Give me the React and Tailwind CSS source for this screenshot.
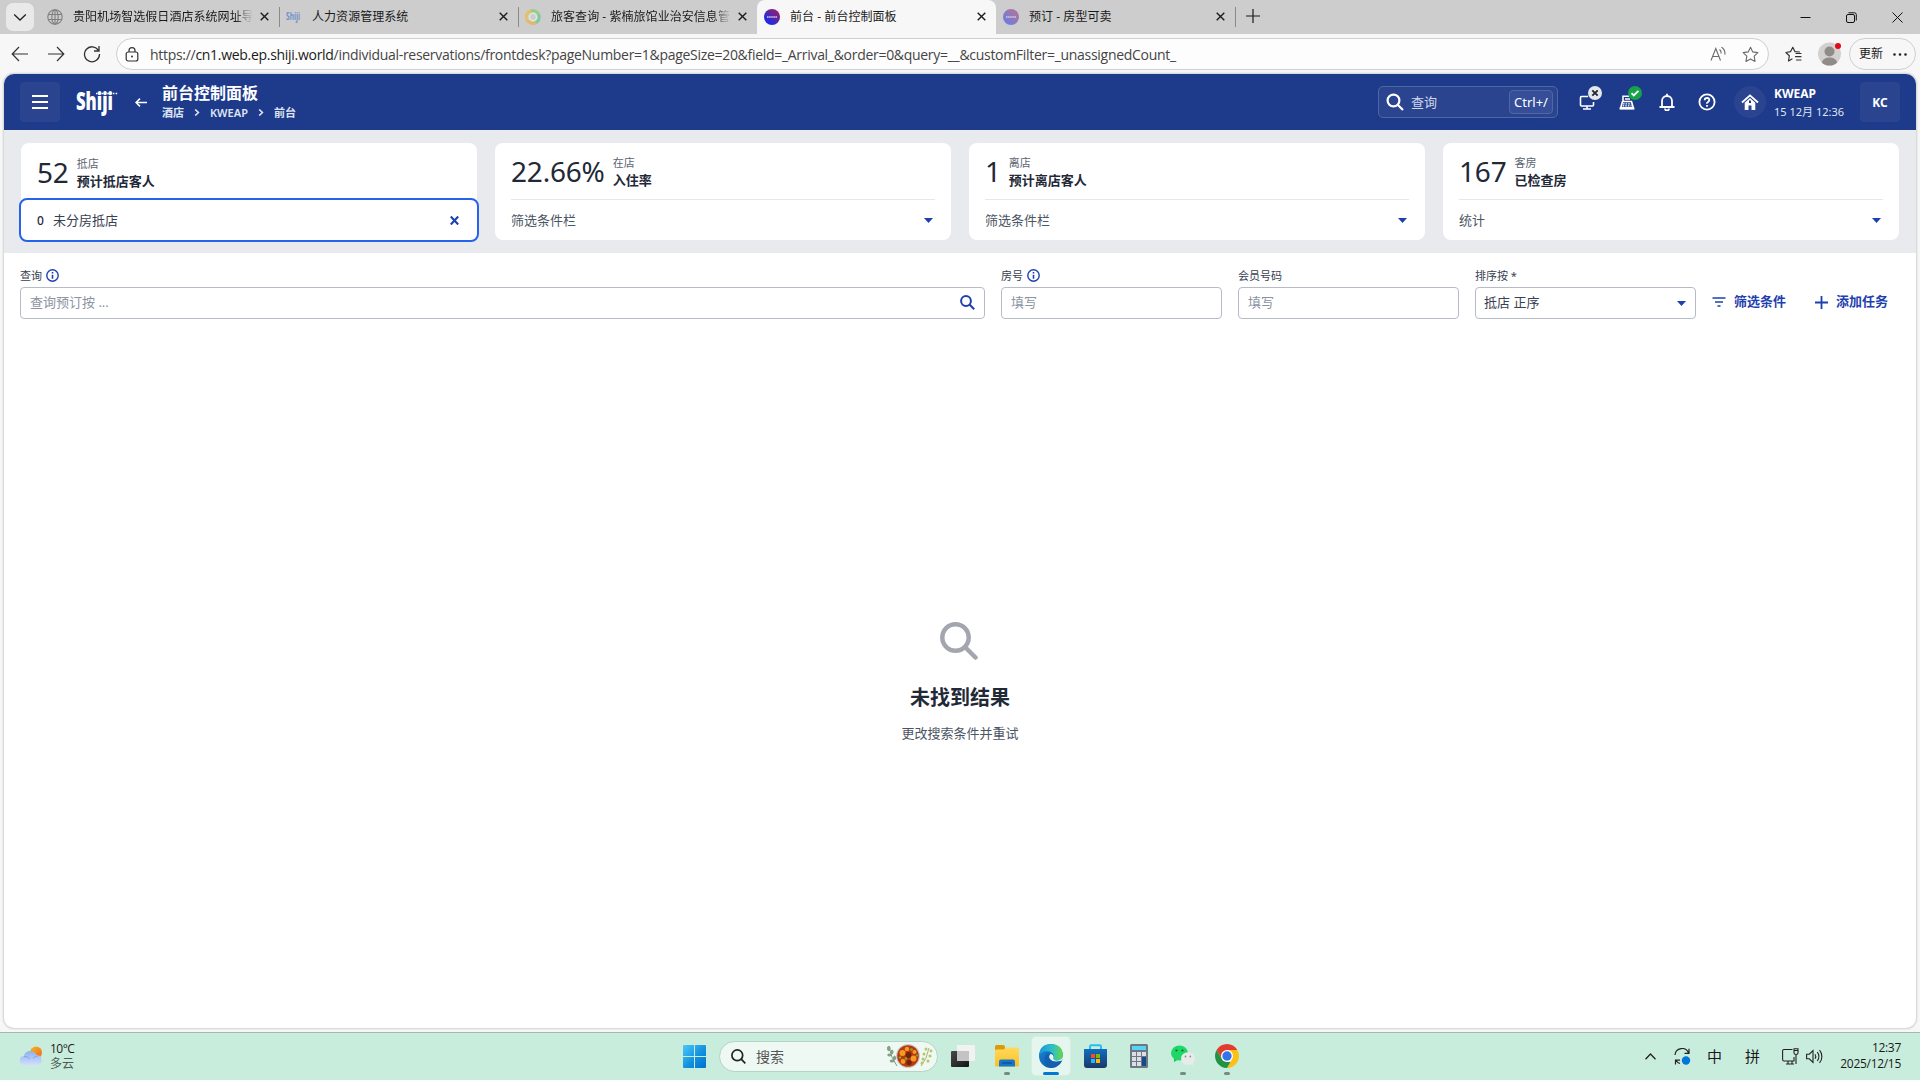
import React from "react";

const UI = "font-['Noto_Sans','Noto_Sans_CJK_SC',sans-serif]";
const SYS = "font-['Open_Sans','Noto_Sans_CJK_SC',sans-serif]";

/* ---------- browser chrome ---------- */

function CloseX({ className = "" }) {
  return (
    <svg className={"h-[9px] w-[9px] shrink-0 " + className} viewBox="0 0 9 9" fill="none" stroke="#1b1b1b" strokeWidth="1.4">
      <path d="M0.7 0.7L8.3 8.3M8.3 0.7L0.7 8.3" />
    </svg>
  );
}

function Globe() {
  return (
    <svg className="h-4 w-4" viewBox="0 0 16 16" fill="none" stroke="#7f7f7f" strokeWidth="1.1">
      <circle cx="8" cy="8" r="7.2" />
      <ellipse cx="8" cy="8" rx="3.2" ry="7.2" />
      <path d="M1.5 5.5h13M1.5 10.5h13M8 1v14" />
    </svg>
  );
}

function ShijiSmall() {
  return (
    <svg className="h-4 w-4" viewBox="0 0 16 16">
      <text x="0" y="11" textLength="14" lengthAdjust="spacingAndGlyphs" fontSize="10" fontWeight="700" fill="#6f8fc8" fontFamily="Open Sans">Shiji</text>
    </svg>
  );
}

function Swirl() {
  return (
    <svg className="h-4 w-4" viewBox="0 0 16 16" fill="none" strokeWidth="3" strokeLinecap="round">
      <path d="M3 12.5A6.3 6.3 0 0 1 7 1.8" stroke="#e6bf6c" />
      <path d="M7 1.8A6.3 6.3 0 0 1 14 6.5" stroke="#8fd08c" />
      <path d="M14 7A6.3 6.3 0 0 1 10.5 13.8" stroke="#7ccaa6" />
      <path d="M10 14A6.3 6.3 0 0 1 3.5 12.5" stroke="#e3b56e" />
      <circle cx="8" cy="8" r="3.6" stroke="#e0ecd2" strokeWidth="1.4" />
    </svg>
  );
}

function Orb({ faded }) {
  return (
    <svg className={"h-4 w-4 " + (faded ? "opacity-50" : "")} viewBox="0 0 16 16">
      <defs>
        <linearGradient id="orb" x1="0.1" y1="0.95" x2="0.75" y2="0.2">
          <stop offset="0" stopColor="#0a2bff" />
          <stop offset="0.45" stopColor="#3a2bc4" />
          <stop offset="1" stopColor="#86207c" />
        </linearGradient>
      </defs>
      <circle cx="8" cy="8" r="8" fill="url(#orb)" />
      <path d="M3 8h10" stroke="#d9c4ea" strokeWidth="1.5" strokeDasharray="1.6 0.5" />
    </svg>
  );
}

function Tab({ icon, title, active, fade, divider }) {
  return (
    <div className={"relative flex h-full w-[239px] shrink-0 items-center pl-[7px] pr-[10px] " + (active ? "rounded-t-[8px] bg-[#f7f7f7]" : "")}>
      {icon}
      <div className={"ml-[10px] h-[18px] w-[180px] overflow-hidden whitespace-nowrap text-[12px] leading-[17px] tracking-[0.05px] text-[#1a1a1a] " + (fade ? "[mask-image:linear-gradient(to_right,black_90%,transparent_100%)]" : "")}>
        {title}
      </div>
      <CloseX className="ml-auto mt-[-1px]" />
      {divider && <div className="absolute right-[-1px] top-[7px] h-5 w-px bg-[#8a8a8a]" />}
    </div>
  );
}

function TabStrip() {
  return (
    <div className="flex h-[34px] bg-[#cdcdcd]">
      <div className="ml-[6px] mt-[3px] flex h-7 w-7 shrink-0 items-center justify-center rounded-[7px] bg-[#e9e9e9]">
        <svg className="h-[14px] w-[14px]" viewBox="0 0 14 14" fill="none" stroke="#222" strokeWidth="1.3"><path d="M1.2 4.5L7 10l5.800-5.500" /></svg>
      </div>
      <div className="ml-[6px] flex">
        <Tab icon={<Globe />} title="贵阳机场智选假日酒店系统网址导航" fade divider />
        <Tab icon={<ShijiSmall />} title="人力资源管理系统" divider />
        <Tab icon={<Swirl />} title="旅客查询 - 紫楠旅馆业治安信息管理系统" fade />
        <Tab icon={<Orb />} title="前台 - 前台控制面板" active />
        <Tab icon={<Orb faded />} title="预订 - 房型可卖" divider />
      </div>
      <svg className="ml-[11px] mt-[9px] h-[14px] w-[14px]" viewBox="0 0 14 14" stroke="#1b1b1b" strokeWidth="1.2"><path d="M7 0v14M0 7h14" /></svg>
      <div className="ml-auto mr-[17px] flex items-center gap-[35px]">
        <svg className="h-[11px] w-[11px]" viewBox="0 0 11 11" stroke="#111" strokeWidth="1"><path d="M0.500 5.500h10" /></svg>
        <svg className="h-[11px] w-[11px]" viewBox="0 0 11 11" fill="none" stroke="#111" strokeWidth="1"><rect x="0.500" y="2.500" width="8" height="8" rx="1.500" /><path d="M2.500 0.800H8.500Q10.300 0.800 10.300 2.600V8.500" /></svg>
        <svg className="h-[11px] w-[11px]" viewBox="0 0 11 11" fill="none" stroke="#111" strokeWidth="1"><path d="M0.500 0.500l10 10M10.500 0.500l-10 10" /></svg>
      </div>
    </div>
  );
}

function Toolbar() {
  return (
    <div className="flex h-10 items-center bg-[#f7f7f7]">
      <svg className="ml-[11px] h-[18px] w-[18px]" viewBox="0 0 18 18" fill="none" stroke="#333" strokeWidth="1.2"><path d="M17 9H1.200M8 2L1.200 9L8 16" /></svg>
      <svg className="ml-[18px] h-[18px] w-[18px]" viewBox="0 0 18 18" fill="none" stroke="#333" strokeWidth="1.2"><path d="M1 9h15.800M10 2L16.800 9L10 16" /></svg>
      <svg className="ml-[18px] h-[18px] w-[18px]" viewBox="0 0 18 18" fill="none" stroke="#333" strokeWidth="1.3"><path d="M15.500 5.500A7.500 7.500 0 1 0 16.500 9M16 1v5h-5" /></svg>
      <div className="ml-[15px] flex h-8 w-[1653px] items-center rounded-full border border-[#cfcfcf] bg-[#fdfdfd]">
        <svg className="ml-[8px] h-[15px] w-[14px]" viewBox="0 0 14 15" fill="none" stroke="#333" strokeWidth="1.200"><rect x="1.200" y="5" width="11.600" height="9" rx="2" /><path d="M4 5V3.600a3 3 0 0 1 6 0V5" /><circle cx="7" cy="9.500" r="1" fill="#333" stroke="none" /></svg>
        <div className="ml-[11px] whitespace-nowrap text-[14px] tracking-[-0.295px] text-[#454545]">
          https://<span className="text-[#1a1a1a]">cn1.web.ep.shiji.world</span>/individual-reservations/frontdesk?pageNumber=1&amp;pageSize=20&amp;field=_Arrival_&amp;order=0&amp;query=__&amp;customFilter=_unassignedCount_
        </div>
        <svg className="ml-auto h-4 w-4" viewBox="0 0 16 16" fill="none" stroke="#6a6a6a" strokeWidth="1.1"><path d="M1 14.500L5.800 2.500L10.500 14.500M2.600 10.500h6.300M9.500 3.500a4 4 0 0 1 1.500 4M11.500 1.200a7.500 7.500 0 0 1 3.300 7.500" /></svg>
        <svg className="ml-[16px] mr-[9px] h-[17px] w-[17px]" viewBox="0 0 17 17" fill="none" stroke="#6a6a6a" strokeWidth="1.100" strokeLinejoin="round"><path d="M8.500 1.200l2.250 4.700 5.100.7-3.700 3.600.9 5.200-4.550-2.500-4.550 2.500.9-5.200L1.150 6.600l5.100-.7z" /></svg>
      </div>
      <svg className="ml-[16px] h-[17px] w-[17px]" viewBox="0 0 17 17" fill="none" stroke="#333" strokeWidth="1.200" strokeLinejoin="round" strokeLinecap="round"><path d="M14.500 6L10 5.700 7.800 1.300 5.500 5.700.900 6.500l3.400 3.300-.8 5.200 3.500-2M11 7.500h5M10.500 10.700h5.500M11.500 14h4.500" /></svg>
      <div className="relative ml-[16px] h-[23px] w-[23px]">
        <svg className="mt-[-1px] h-6 w-[23px]" viewBox="0 0 23 24"><defs><clipPath id="av"><circle cx="11.500" cy="12" r="11.500" /></clipPath></defs><g clipPath="url(#av)"><rect width="23" height="24" fill="#d3d1cf" /><circle cx="11.500" cy="9.500" r="5" fill="#8f8c88" /><ellipse cx="11.500" cy="20.500" rx="7.500" ry="5" fill="#8f8c88" /></g></svg>
        <div className="absolute right-0 top-0 h-[6px] w-[6px] rounded-full bg-[#e00b1c]" />
      </div>
      <div className="ml-[8px] flex h-8 w-[67px] items-center rounded-full border border-[#cfcfcf] pl-[9px] text-[12px] text-[#1a1a1a]">
        更新
        <svg className="ml-[10px] h-[3px] w-[14px]" viewBox="0 0 14 3" fill="#222"><circle cx="1.500" cy="1.500" r="1.300" /><circle cx="7" cy="1.500" r="1.300" /><circle cx="12.500" cy="1.500" r="1.300" /></svg>
      </div>
    </div>
  );
}

/* ---------- application ---------- */

function Chevron() {
  return <svg className="h-[7px] w-[6px]" viewBox="0 0 6 7" fill="none" stroke="#dfe5f5" strokeWidth="1.600"><path d="M1.200 0.500L4.400 3.500L1.200 6.500" /></svg>;
}

function AppHeader() {
  return (
    <header className="flex h-14 shrink-0 items-center bg-[#1e3a8a] text-white">
      <div className="ml-[16px] flex h-10 w-10 items-center justify-center rounded-[4px] bg-[#2a4490]">
        <svg className="h-[14px] w-4" viewBox="0 0 16 14" stroke="#fff" strokeWidth="2"><path d="M0 1h16M0 7h16M0 13h16" /></svg>
      </div>
      <svg className="ml-[16px] h-7 w-[44px]" viewBox="0 0 44 28">
        <text x="0" y="22" textLength="37" lengthAdjust="spacingAndGlyphs" fontFamily="Open Sans" fontWeight="800" fontSize="24" fill="#fff">Shiji</text>
        <path d="M20 5.500h22" stroke="#fff" strokeWidth="1.500" strokeDasharray="1.600 1.200" />
      </svg>
      <svg className="ml-[15px] h-[9px] w-3" viewBox="0 0 12 9" fill="none" stroke="#fff" strokeWidth="1.500"><path d="M12 4.500H1M5 0.600L1 4.500L5 8.400" /></svg>
      <div className="ml-[15px] flex flex-col pt-px">
        <div className="text-[16px] font-bold leading-[20px]">前台控制面板</div>
        <div className="flex items-center text-[11px] font-semibold leading-[19px] text-[#dfe5f5]">
          <span>酒店</span><span className="mx-[10px]"><Chevron /></span><span>KWEAP</span><span className="mx-[10px]"><Chevron /></span><span>前台</span>
        </div>
      </div>

      <div className="ml-auto flex h-8 w-[180px] items-center rounded-[5px] border border-[#5067a5] bg-[#2a4490] pl-[7px] pr-[4px]">
        <svg className="h-[18px] w-[18px]" viewBox="0 0 18 18" fill="none" stroke="#fff" strokeWidth="2.200"><circle cx="7.500" cy="7.500" r="5.900" /><path d="M11.700 11.700L17 17" /></svg>
        <span className="ml-[7px] pt-px text-[13px] text-[#cfd6ea]">查询</span>
        <div className="ml-auto flex h-6 w-[44px] items-center justify-center rounded-[4px] border border-[#5067a5] bg-[#354e97] pt-px text-[13px]">Ctrl+/</div>
      </div>
      <div className="relative ml-[21px] h-4 w-4">
        <svg className="h-4 w-4" viewBox="0 0 16 16" fill="none" stroke="#fff" strokeWidth="1.600"><path d="M9 2.500H2.500Q1.500 2.500 1.500 3.500V11Q1.500 12 2.500 12H13.500Q14.500 12 14.500 11V8M4 15h8M8 12v3" /></svg>
        <svg className="absolute left-[9px] top-[-8px] h-[14px] w-[14px]" viewBox="0 0 14 14"><circle cx="7" cy="7" r="7" fill="#e5e7eb" /><path d="M4.300 4.300l5.400 5.400M9.700 4.300L4.300 9.700" stroke="#1f2937" strokeWidth="1.900" /></svg>
      </div>
      <div className="relative ml-[24px] h-4 w-4">
        <svg className="h-4 w-4" viewBox="0 0 16 16" fill="none" stroke="#fff" strokeWidth="1.600"><path d="M4 8V2.200h6M3.500 7.500h9L14.500 14.500h-13z" /><path d="M0.800 14.300h14.400" strokeWidth="2.600" /><path d="M4 9.800h8.500M3.600 11.800h9" strokeWidth="1.300" strokeDasharray="1.600 1" /><path d="M6 5h5" strokeWidth="1.400" /></svg>
        <svg className="absolute left-[9px] top-[-8px] h-[14px] w-[14px]" viewBox="0 0 14 14"><circle cx="7" cy="7" r="7" fill="#16a34a" /><path d="M3.500 7.200l2.300 2.300 4.600-4.600" fill="none" stroke="#fff" strokeWidth="1.900" /></svg>
      </div>
      <svg className="ml-[24px] h-[18px] w-4" viewBox="0 0 16 18" fill="none" stroke="#fff" strokeWidth="1.800"><path d="M0.500 14h15M3 14V8a5 5 0 0 1 10 0v6M8 3V0.800M6 15.500a2 2 0 0 0 4 0" /></svg>
      <svg className="ml-[23px] h-[18px] w-[18px]" viewBox="0 0 18 18" fill="none" stroke="#fff" strokeWidth="1.800"><circle cx="9" cy="9" r="7.600" /><path d="M6.700 7.200Q6.700 5 9 5T11.300 7Q11.300 8.100 10 8.900T9 10.700M9 12v1.700" /></svg>
      <div className="ml-[18px] flex h-8 w-8 items-center justify-center rounded-full bg-[#2a4490]">
        <svg className="h-4 w-[18px]" viewBox="0 0 18 16"><path d="M1 8.500L9 1.400L17 8.500" fill="none" stroke="#fff" strokeWidth="1.900" /><path d="M9 4L3.700 8.800V16H7.500V11.500H10.500V16H14.300V8.800z" fill="#fff" /><path d="M8 6.500h2v2.500H8z" fill="#1e3a8a" /></svg>
      </div>
      <div className="ml-[8px] w-[70px] whitespace-nowrap pt-[2px]">
        <div className="text-[12px] font-bold leading-[16px]">KWEAP</div>
        <div className="mt-[1px] text-[11px] leading-[17px] text-[#dfe5f5]">15 12月 12:36</div>
      </div>
      <div className="ml-[16px] mr-[16px] flex h-10 w-10 items-center justify-center rounded-[4px] bg-[#2a4490] pt-px text-[12px] font-bold">KC</div>
    </header>
  );
}

function Caret() {
  return <svg className="h-[5px] w-[9px]" viewBox="0 0 9 5" fill="#1e40af"><path d="M0 0h9L4.500 5z" /></svg>;
}

function StatCard({ value, label, title, filter, selected }) {
  return (
    <div className="flex h-[97px] flex-col rounded-[8px] bg-white px-4">
      <div className={"flex h-[57px] shrink-0 items-center pt-[3px] " + (selected ? "" : "border-b border-[#e5e7eb]")}>
        <span className="mt-[-3px] text-[28px] leading-[32px] tracking-[-0.200px] text-[#1f2937]">{value}</span>
        <div className="ml-[8px] mt-[-1px]">
          <div className="text-[11px] leading-[16px] text-[#5b6472]">{label}</div>
          <div className="text-[13px] font-bold leading-[18px] text-[#1f2937]">{title}</div>
        </div>
      </div>
      {selected ? (
        <div className="mx-[-18px] mt-[-2px] flex h-11 shrink-0 items-center rounded-[8px] border-2 border-[#2563eb] bg-white pl-[16px] pr-[18px] pt-px text-[13px] text-[#374151]">
          <span className="text-[12px] font-medium text-[#1f2937]">0</span>
          <span className="ml-[9px]">{filter}</span>
          <svg className="ml-auto h-[9px] w-[9px]" viewBox="0 0 9 9" stroke="#1e40af" strokeWidth="2.100"><path d="M0.800 0.500l7.400 8M8.200 0.500l-7.400 8" /></svg>
        </div>
      ) : (
        <div className="flex grow items-center justify-between pr-[2px] pt-[2px] text-[13px] text-[#4b5563]">
          {filter}
          <span className="mt-[-2px]"><Caret /></span>
        </div>
      )}
    </div>
  );
}

function Info() {
  return <svg className="ml-1 mt-[-1px] h-[13px] w-[13px]" viewBox="0 0 13 13" fill="none" stroke="#1e40af"><circle cx="6.500" cy="6.500" r="5.700" strokeWidth="1.400" /><path d="M6.500 5.700v4M6.500 3v1.500" strokeWidth="1.600" /></svg>;
}

function Field({ label, info, className, children }) {
  return (
    <div className={className}>
      <div className="flex h-[18px] items-center text-[11px] leading-[18px] text-[#374151]">{label}{info && <Info />}</div>
      <div className="mt-[2px] flex h-8 items-center justify-between rounded-[4px] border border-[#b6bbc8] bg-white px-[9px] text-[13px]">{children}</div>
    </div>
  );
}

function AppPage() {
  return (
    <div className={"mx-1 flex h-[954px] flex-col overflow-hidden rounded-[10px] bg-white shadow-[0_0_2px_1px_rgba(0,0,0,0.16)] " + UI}>
      <AppHeader />
      <div className="grid h-[123px] shrink-0 grid-cols-4 gap-[18px] bg-[#e9eaee] px-[17px] pt-[13px]">
        <StatCard value="52" label="抵店" title="预计抵店客人" filter="未分房抵店" selected />
        <StatCard value="22.66%" label="在店" title="入住率" filter="筛选条件栏" />
        <StatCard value="1" label="离店" title="预计离店客人" filter="筛选条件栏" />
        <StatCard value="167" label="客房" title="已检查房" filter="统计" />
      </div>
      <div className="flex gap-4 px-4 pt-[14px]">
        <Field label="查询" info className="w-[965px]">
          <span className="text-[#8b93a3]">查询预订按 ...</span>
          <svg className="mt-[-2px] h-[15px] w-[15px]" viewBox="0 0 15 15" fill="none" stroke="#1e40af" strokeWidth="2"><circle cx="6" cy="6" r="4.900" /><path d="M9.500 9.500L14.200 14.200" /></svg>
        </Field>
        <Field label="房号" info className="w-[221px]"><span className="text-[#8b93a3]">填写</span></Field>
        <Field label="会员号码" className="w-[221px]"><span className="text-[#8b93a3]">填写</span></Field>
        <Field label="排序按 *" className="w-[221px]"><span className="ml-[-1px] text-[#374151]">抵店 正序</span><span><Caret /></span></Field>
        <div className="mt-[19px] flex h-8 items-center text-[13px] font-bold text-[#1e40af]">
          <svg className="h-[10px] w-[14px]" viewBox="0 0 14 10" stroke="#1e40af" strokeWidth="1.700"><path d="M0.500 1h13M3 5h8M5.500 9h3" /></svg>
          <span className="ml-[8px]">筛选条件</span>
          <svg className="ml-[29px] h-[13px] w-[13px]" viewBox="0 0 13 13" stroke="#1e40af" strokeWidth="1.800"><path d="M6.500 0v13M0 6.500h13" /></svg>
          <span className="ml-[8px]">添加任务</span>
        </div>
      </div>
      <div className="flex flex-col items-center pt-[303px]">
        <svg className="mr-[2px] h-[38px] w-[38px]" viewBox="0 0 38 38" fill="none" stroke="#a3a6af" strokeWidth="4.500"><circle cx="15.500" cy="15.500" r="13.200" /><path d="M25.500 25.500L35.500 35.500" strokeLinecap="round" /></svg>
        <div className="mt-[23px] text-[20px] font-bold leading-[30px] text-[#1f2937]">未找到结果</div>
        <div className="mt-[10px] text-[13px] leading-[20px] text-[#4b5563]">更改搜索条件并重试</div>
      </div>
    </div>
  );
}

/* ---------- taskbar ---------- */

function WeatherIcon() {
  return (
    <svg className="h-5 w-6" viewBox="0 0 24 20">
      <defs>
        <linearGradient id="sun" x1="0" y1="0" x2="1" y2="1"><stop offset="0" stopColor="#f8b820" /><stop offset="1" stopColor="#f2661b" /></linearGradient>
        <linearGradient id="cloud" x1="0" y1="0" x2="0" y2="1"><stop offset="0" stopColor="#8fb1ee" /><stop offset="1" stopColor="#d3e0fb" /></linearGradient>
      </defs>
      <circle cx="17" cy="6.500" r="6" fill="url(#sun)" />
      <path d="M5 19.500a4.800 4.800 0 0 1-.3-9.500A6.800 6.800 0 0 1 17.500 9a5.400 5.400 0 0 1 1.500 10.500z" fill="url(#cloud)" />
      <path d="M5 10.500Q9 10 11 13M14 12.500Q16 9.800 19 10" fill="none" stroke="#7d9fe6" strokeWidth="0.900" />
    </svg>
  );
}

function WinLogo() {
  return (
    <svg className="h-[23px] w-[23px]" viewBox="0 0 23 23">
      <defs><linearGradient id="win" gradientUnits="userSpaceOnUse" x1="0" y1="0" x2="23" y2="23"><stop offset="0" stopColor="#4cc8fb" /><stop offset="0.550" stopColor="#1292dd" /><stop offset="1" stopColor="#0070cf" /></linearGradient></defs>
      <path d="M1 0H11V11H0V1Q0 0 1 0M12 0H22Q23 0 23 1V11H12zM0 12H11V23H1Q0 23 0 22zM12 12H23V22Q23 23 22 23H12z" fill="url(#win)" />
    </svg>
  );
}

function SoupArt() {
  return (
    <svg className="h-[24px] w-[46px]" viewBox="0 0 46 24">
      <g stroke="#7f9a80" strokeWidth="1" fill="#8aa389">
        <path d="M2 3Q4 14 10 22" fill="none" />
        <ellipse cx="1.800" cy="4.500" rx="1.300" ry="2.200" /><ellipse cx="5" cy="8" rx="1" ry="2" /><ellipse cx="2.500" cy="11" rx="1.800" ry="1" /><ellipse cx="7.500" cy="14" rx="1" ry="2" /><ellipse cx="5" cy="17" rx="2" ry="1" />
      </g>
      <g fill="#b9c46a"><path d="M34 22Q40 15 42 4" fill="none" stroke="#a9b86a" strokeWidth="1" /><circle cx="39" cy="5" r="1.500" /><circle cx="44" cy="7" r="1.400" /><circle cx="37" cy="10" r="1.500" /><circle cx="43" cy="12" r="1.500" /><circle cx="36" cy="15" r="1.500" /><circle cx="41" cy="17" r="1.500" /><circle cx="35" cy="19" r="1.500" /></g>
      <circle cx="21" cy="12" r="12" fill="#c9cccb" />
      <circle cx="21" cy="12" r="10.800" fill="#b8380f" />
      <g fill="#f59a22"><circle cx="15.500" cy="9" r="3" /><circle cx="26.500" cy="14.500" r="2.900" /><circle cx="20" cy="5" r="2.300" /><circle cx="16" cy="17.500" r="2.400" /><circle cx="27.500" cy="8" r="2" /></g>
      <g fill="#6f2413"><circle cx="21.500" cy="11" r="2.900" /><circle cx="22" cy="18.500" r="2.600" /></g>
      <g fill="#7fae2c"><circle cx="24.500" cy="5.500" r="1.300" /><circle cx="13" cy="13.500" r="1.200" /><circle cx="19" cy="14.500" r="1.200" /><circle cx="30" cy="11.500" r="1.100" /></g>
    </svg>
  );
}

function TaskView() {
  return (
    <svg className="h-[22px] w-6" viewBox="0 0 24 22">
      <defs><linearGradient id="tv1" x1="0" y1="0" x2="1" y2="1"><stop offset="0" stopColor="#4a4a4a" /><stop offset="1" stopColor="#141414" /></linearGradient></defs>
      <rect x="0" y="6" width="18" height="16" rx="1" fill="url(#tv1)" />
      <rect x="6" y="0" width="18" height="16" rx="1" fill="#f2f2f2" />
      <rect x="6" y="6" width="12" height="10" fill="#c4c4c4" />
    </svg>
  );
}

function Explorer() {
  return (
    <svg className="h-6 w-6" viewBox="0 0 24 24">
      <defs><linearGradient id="ex" x1="0" y1="0" x2="0" y2="1"><stop offset="0" stopColor="#ffda5c" /><stop offset="1" stopColor="#fcbf27" /></linearGradient></defs>
      <path d="M0 2.500Q0 1 1.500 1H8Q10 1 10 3v5H0z" fill="#dc9a08" />
      <path d="M0 6.500Q0 5.500 2 5.500H8Q9 5.500 9.800 4.500T11.500 3.500H23Q24 3.500 24 4.500V21Q24 22.500 22.500 22.500H1.500Q0 22.500 0 21z" fill="url(#ex)" />
      <path d="M4 22.500V17.500Q4 15.500 6 15.500H18Q20 15.500 20 17.500V22.500z" fill="#1477c9" />
      <path d="M7 19h10" stroke="#0a57a4" strokeWidth="1.600" />
    </svg>
  );
}

function Edge() {
  return (
    <svg className="h-6 w-6" viewBox="0 0 24 24">
      <defs>
        <linearGradient id="ed1" x1="0" y1="0.500" x2="1" y2="0.500"><stop offset="0" stopColor="#1e95dc" /><stop offset="0.550" stopColor="#2cc0c8" /><stop offset="1" stopColor="#68d846" /></linearGradient>
        <linearGradient id="ed2" x1="0" y1="0" x2="1" y2="1"><stop offset="0" stopColor="#1a86d8" /><stop offset="1" stopColor="#0d4f9f" /></linearGradient>
      </defs>
      <circle cx="12" cy="12" r="12" fill="url(#ed2)" />
      <path d="M0.200 11Q1 0 12 0T24 10.500Q24 16.500 18 16.500Q13.500 16.500 14.500 13.500Q15.500 10.500 12.500 8.500Q9.500 6.500 5.500 7.500Q2 8.500 0.200 11" fill="url(#ed1)" />
      <path d="M8.500 22Q4 17.500 6 12.500Q7.500 9 11.500 9.200Q9 11.500 10.500 14.500Q13 19.500 22 17.600Q18 23.500 12 24Q10 23.500 8.500 22" fill="#1260b0" />
      <path d="M11.800 9.800Q9 12.500 11 15Q14 19 22.500 16.800L24 15V12Q23.500 15.500 19 16.500Q13.500 17 14.500 13.500Q15 11 11.800 9.800" fill="#e6f6ef" />
    </svg>
  );
}

function Store() {
  return (
    <svg className="h-6 w-[23px]" viewBox="0 0 23 24">
      <defs><linearGradient id="st" x1="0" y1="0" x2="0" y2="1"><stop offset="0" stopColor="#0f6fc0" /><stop offset="1" stopColor="#1c3768" /></linearGradient></defs>
      <path d="M6 6V2.500Q6 1.200 7.300 1.200H15.700Q17 1.200 17 2.500V6" fill="none" stroke="#29bdf0" strokeWidth="2" />
      <path d="M0 5H23V21Q23 24 20 24H3Q0 24 0 21z" fill="url(#st)" />
      <path d="M7 10h4v4H7z" fill="#f25022" /><path d="M12 10h4v4h-4z" fill="#7fba00" /><path d="M7 15h4v4H7z" fill="#35b1ee" /><path d="M12 15h4v4h-4z" fill="#ffb900" />
    </svg>
  );
}

function Calculator() {
  return (
    <svg className="h-6 w-[18px]" viewBox="0 0 18 24">
      <rect width="18" height="24" rx="1.500" fill="#6f7783" />
      <rect x="2" y="2" width="14" height="4" fill="#56d4f7" />
      <g fill="#dbe0e7"><path d="M2 8h4v4H2zM7 8h4v4H7zM12 8h4v4h-4zM2 13h4v4H2zM7 13h4v4H7zM2 18h4v4H2zM7 18h4v4H7z" /></g>
      <path d="M12 13h4v9h-4z" fill="#134a8e" />
    </svg>
  );
}

function WeChat() {
  return (
    <svg className="h-[22px] w-6" viewBox="0 0 24 22">
      <path d="M3 13.500L3 17L6.500 15z" fill="#15c45a" />
      <ellipse cx="8.500" cy="8" rx="8.500" ry="7.500" fill="#1fd767" />
      <circle cx="5.500" cy="5.500" r="1.100" fill="#0d6b34" /><circle cx="11.500" cy="5.500" r="1.100" fill="#0d6b34" />
      <ellipse cx="17" cy="13.500" rx="7" ry="6.300" fill="#e9ebeb" /><path d="M19 18.500L22 20.500L22 16z" fill="#e9ebeb" />
      <circle cx="14.500" cy="11.500" r="0.900" fill="#8a8f8f" /><circle cx="19.300" cy="11.500" r="0.900" fill="#8a8f8f" />
    </svg>
  );
}

function Chrome() {
  return (
    <svg className="h-6 w-6" viewBox="0 0 24 24">
      <path d="M17.200 15L12 24A12 12 0 0 0 22.390 6H12z" fill="#fbc116" />
      <path d="M1.610 6A12 12 0 0 1 22.390 6H12L6.800 15z" fill="#e33b2e" />
      <path d="M1.610 6L6.800 15L12 18H15.460L12 24A12 12 0 0 1 1.610 6" fill="#229342" />
      <circle cx="12" cy="12" r="6" fill="#fff" /><circle cx="12" cy="12" r="4.700" fill="#3474e8" />
    </svg>
  );
}

function Task({ children, active, running }) {
  return (
    <div className={"relative flex h-[38px] w-[38px] shrink-0 items-center justify-center rounded-[4px] " + (active ? "bg-[#e4f6ee] shadow-[0_0_0_1px_#d8ece3]" : "")}>
      {children}
      {active && <div className="absolute bottom-0 left-[11px] h-[3px] w-4 rounded-full bg-[#0078d4]" />}
      {running && <div className="absolute bottom-0 left-4 h-[3px] w-[6px] rounded-full bg-[#788a82]" />}
    </div>
  );
}

function Taskbar() {
  return (
    <div className={"flex h-12 items-center border-t border-[#a3b8ae] bg-[#c9eddd] pb-px " + SYS}>
      <div className="flex w-[675px] items-center pl-[19px]">
        <WeatherIcon />
        <div className="ml-[7px] text-[12px] leading-[15px] text-[#1a1a1a]">
          <div className="tracking-[-0.500px]">10°C</div>
          <div className="text-[#4d5c56]">多云</div>
        </div>
      </div>
      <Task><WinLogo /></Task>
      <div className="ml-[6px] flex h-[31px] w-[219px] items-center rounded-full border border-[#b5d3c6] bg-[#eef9f4] pl-[11px] pr-[4px] text-[14px] text-[#555]">
        <svg className="h-[15px] w-[15px]" viewBox="0 0 15 15" fill="none" stroke="#222" strokeWidth="1.700"><circle cx="6.300" cy="6.300" r="5.400" /><path d="M10.200 10.200L14.300 14.300" /></svg>
        <span className="ml-[10px]">搜索</span>
        <span className="ml-auto"><SoupArt /></span>
      </div>
      <div className="ml-[6px] flex gap-[6px]">
        <Task><TaskView /></Task>
        <Task running><Explorer /></Task>
        <Task active><Edge /></Task>
        <Task><Store /></Task>
        <Task><Calculator /></Task>
        <Task running><WeChat /></Task>
        <Task running><Chrome /></Task>
      </div>
      <div className="ml-auto flex items-center pr-[19px] text-[#1a1a1a]">
        <svg className="h-[7px] w-[11px]" viewBox="0 0 11 7" fill="none" stroke="#222" strokeWidth="1.300"><path d="M0.500 6.300L5.500 1L10.500 6.300" /></svg>
        <svg className="ml-[18px] h-[17px] w-[17px]" viewBox="0 0 17 17" fill="none" stroke="#222" strokeWidth="1.200"><path d="M1 7A7 7 0 0 1 14.500 5M15 0.800V5.300H10.500M1.500 16.500V12.200H6M2 12.500A7 7 0 0 0 6 15.500" /><circle cx="12" cy="12.500" r="4.200" fill="#0078d7" stroke="none" /></svg>
        <span className="ml-[16px] text-[15px] leading-[18px]">中</span>
        <span className="ml-[23px] text-[15px] leading-[18px]">拼</span>
        <svg className="ml-[22px] h-[17px] w-[17px]" viewBox="0 0 17 17" fill="none" stroke="#222" strokeWidth="1.100"><path d="M10.500 1.500H2Q0.600 1.500 0.600 3V11.500Q0.600 13 2 13H12V9M4 16h8M6 13v3M10 13v3M12 2.500h4V5Q16 6.500 14 6.500T12 5zM12 2.500V0.800h4V2.500M14 6.500V16" /></svg>
        <svg className="ml-[7px] h-[15px] w-[17px]" viewBox="0 0 17 15" fill="none" stroke="#222" strokeWidth="1.100"><path d="M0.600 5.200h2.700L7 1.500v12L3.300 9.800H0.600zM9 5.200a4 4 0 0 1 0 4.600M11.300 3.200a7 7 0 0 1 0 8.600M13.500 1.200a9.500 9.500 0 0 1 0 12.600" /></svg>
        <div className="ml-[16px] w-[62px] whitespace-nowrap text-right text-[12px] leading-[16px] tracking-[-0.300px]">
          <div>12:37</div>
          <div>2025/12/15</div>
        </div>
      </div>
    </div>
  );
}

export default function App() {
  return (
    <div className="flex h-[1080px] w-[1920px] flex-col overflow-hidden bg-[#f7f7f7]">
      <div className={SYS}>
        <TabStrip />
        <Toolbar />
      </div>
      <AppPage />
      <div className="mt-auto"><Taskbar /></div>
    </div>
  );
}
